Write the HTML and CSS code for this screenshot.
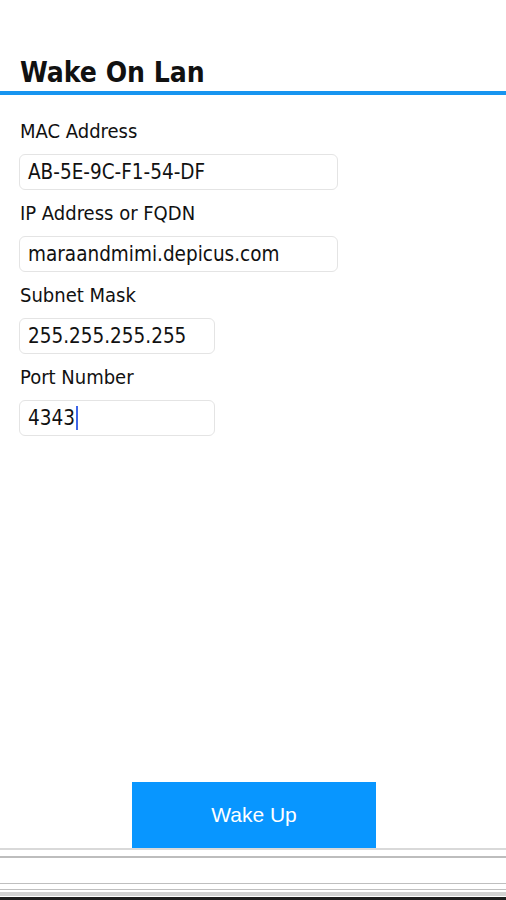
FILE: index.html
```html
<!DOCTYPE html>
<html lang="en">
<head>
<meta charset="utf-8">
<title>Wake On Lan</title>
<link rel="stylesheet" href="styles.css">
</head>
<body>
<header class="header">
  <h1 class="title">Wake On Lan</h1>
</header>
<main class="form">
  <div class="label">MAC Address</div>
  <div class="field wide">AB-5E-9C-F1-54-DF</div>
  <div class="label">IP Address or FQDN</div>
  <div class="field wide">maraandmimi.depicus.com</div>
  <div class="label">Subnet Mask</div>
  <div class="field narrow">255.255.255.255</div>
  <div class="label">Port Number</div>
  <div class="field narrow">4343<span class="caret"></span></div>
</main>
<div class="actions">
  <button class="wake">Wake Up</button>
</div>
<footer class="toolbar">
  <div class="tb-top"></div>
  <div class="tb-body"></div>
  <div class="tb-lines"></div>
  <div class="tb-bottom"></div>
</footer>
</body>
</html>
```
FILE: styles.css
```css
html, body {
  margin: 0;
  padding: 0;
  background: #ffffff;
}
body {
  height: 900px;
  display: flex;
  flex-direction: column;
  font-family: "DejaVu Sans Condensed", "DejaVu Sans", sans-serif;
  font-stretch: condensed;
  color: #111;
}
.header {
  padding-top: 55px;
}
.title {
  margin: 0;
  padding: 0 20px;
  font-size: 28px;
  line-height: 36px;
  font-weight: bold;
  border-bottom: 4px solid #1895f0;
}
.form {
  flex: 1;
  display: grid;
  grid-auto-rows: auto;
  justify-items: start;
  align-content: start;
  row-gap: 11px;
  padding: 24px 19px 0;
}
.label {
  font-size: 20px;
  line-height: 24px;
  padding-left: 1px;
}
.field {
  box-sizing: border-box;
  height: 36px;
  border: 1px solid #e4e4e4;
  border-radius: 6px;
  padding: 0 8px;
  font-size: 20.5px;
  display: flex;
  align-items: center;
  color: #111;
}
.wide { width: 319px; }
.narrow { width: 196px; }
.caret {
  display: inline-block;
  width: 2px;
  height: 24px;
  margin-left: 1px;
  background: #3f66e8;
}
.actions {
  display: flex;
  justify-content: center;
}
.wake {
  width: 244px;
  height: 66px;
  margin-left: 2px;
  border: 0;
  border-radius: 0;
  background: #0896ff;
  color: #ffffff;
  font-family: "Liberation Sans", Arial, sans-serif;
  font-size: 21px;
  padding: 0;
}
.toolbar {
  height: 52px;
  display: flex;
  flex-direction: column;
}
.tb-top {
  height: 2px;
  background: #d9d9d9;
}
.tb-body {
  height: 25px;
  margin-top: 6px;
  border-top: 2px solid #bdbdbd;
}
.tb-lines {
  height: 5px;
  border-top: 1px solid #bfbfbf;
  border-bottom: 1px solid #bfbfbf;
}
.tb-bottom {
  flex: 1;
  border-top: 4px solid #d2d2d2;
  border-bottom: 3px solid #1e1e1e;
  margin-top: 2px;
}
```
